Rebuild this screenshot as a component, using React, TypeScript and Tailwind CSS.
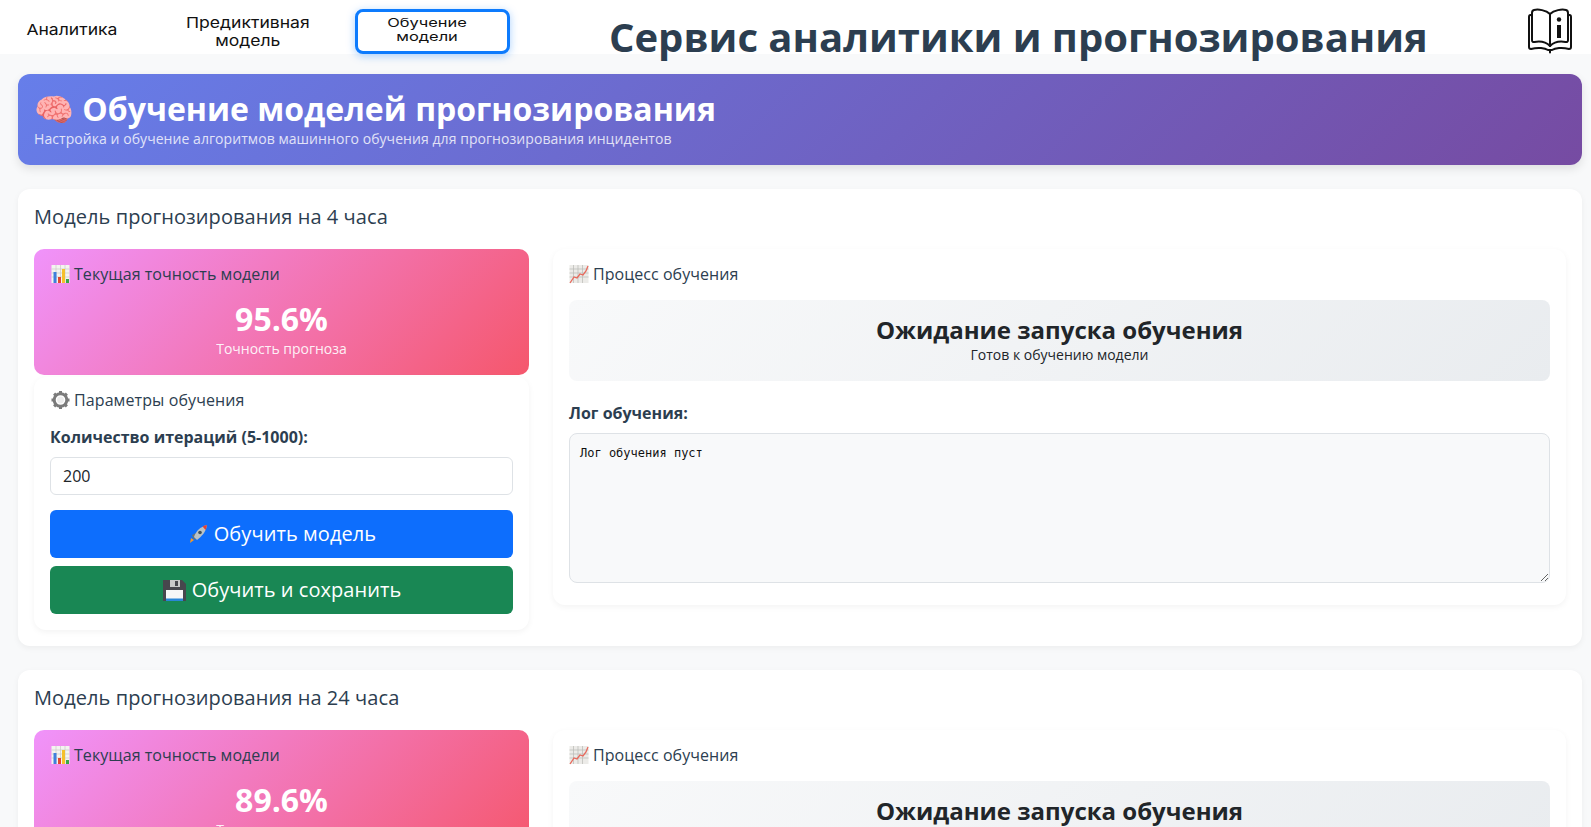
import type { ReactNode } from 'react'

function BookInfoIcon() {
  return (
    <svg width="44" height="46" viewBox="0 0 44 46" fill="none" stroke="#111" strokeWidth="2" strokeLinejoin="round" strokeLinecap="round">
      <path d="M22 6 C18 2 10 1 6 2 Q4 2.500 4 5 V32 Q4 34.500 6.500 34 C12 33 18 34 22 38 C26 34 32 33 37.500 34 Q40 34.500 40 32 V5 Q40 2.500 38 2 C34 1 26 2 22 6 Z" />
      <path d="M22 6 V38" />
      <path d="M4 7 H2.500 Q1 7 1 9 V39 Q1 41 3 41 C10 39 17 40 20 42 H24 C27 40 34 39 41 41 Q43 41 43 39 V9 Q43 7 41.500 7 H40" />
      <path d="M22 42 V44.500" />
      <circle cx="31" cy="11.500" r="2.200" fill="#111" stroke="none" />
      <path d="M31 17 V30" strokeWidth="4" strokeLinecap="butt" />
    </svg>
  )
}

// the emoji in the reference come from another set than the one installed here
function ChartBarsEmoji() {
  return (
    <svg width="20" height="20" viewBox="0 0 20 20" className="shrink-0">
      <rect x="1.500" y="1" width="18" height="18" fill="#f4f4f0" />
      <path d="M1.500 5H19.500M1.500 9H19.500M1.500 13H19.500M6 1V19M10.500 1V19M15 1V19" stroke="#c9c9c5" strokeWidth="0.7" />
      <rect x="3.500" y="8" width="3" height="11" fill="#3f7fdc" />
      <rect x="8" y="13" width="3" height="6" fill="#e2492f" />
      <rect x="12" y="5" width="3" height="14" fill="#f5c02c" />
      <rect x="16" y="15" width="3" height="4" fill="#3aa648" />
    </svg>
  )
}

function ChartLineEmoji() {
  return (
    <svg width="20" height="20" viewBox="0 0 20 20" className="shrink-0">
      <rect x="0.500" y="1" width="19" height="18" fill="#ecebe8" />
      <path d="M0.500 5H19.500M0.500 9H19.500M0.500 13H19.500M4.500 1V19M9 1V19M13.500 1V19" stroke="#b9b9b5" strokeWidth="0.7" />
      <path d="M1 19 L5 13 L8 14 L11 10 L14 11 L17 7 L19 2" fill="none" stroke="#e8695c" strokeWidth="1.300" />
    </svg>
  )
}

function GearEmoji() {
  return (
    <svg width="20" height="20" viewBox="0 0 20 20" className="shrink-0">
      <circle cx="10.500" cy="10" r="6.300" fill="none" stroke="#7b7b7b" strokeWidth="3" />
      <path
        d="M10.500 1V4M10.500 16V19M1.500 10H4.500M16.500 10H19.500M4.100 3.600L6.300 5.800M14.700 14.200L16.900 16.400M4.100 16.400L6.300 14.200M14.700 5.800L16.900 3.600"
        stroke="#7b7b7b"
        strokeWidth="3"
      />
      <circle cx="10.500" cy="10" r="3.400" fill="#ededed" />
    </svg>
  )
}

function RocketEmoji() {
  return (
    <svg width="22" height="20" viewBox="0 0 22 20" className="shrink-0">
      <path d="M3 19 L4 14 L7 16 Z" fill="#f59a23" />
      <path d="M5 11 L9 9 L10 14 L7 16 Z" fill="#66737a" />
      <path d="M7 13 C9 7 13 3 20 1 C19 8 15 12 10 16 Z" fill="#b9c2c6" />
      <path d="M15.500 2.400 C17 1.800 18.500 1.400 20 1 C19.700 3 19.200 4.500 18.600 6 Z" fill="#e0413a" />
      <circle cx="13" cy="8.500" r="1.800" fill="#40525a" />
    </svg>
  )
}

function FloppyEmoji() {
  return (
    <svg width="25" height="23" viewBox="0 0 25 23" className="shrink-0">
      <path d="M1 1 H20 L24 5 V22 H1 Z" fill="#47474d" />
      <rect x="8" y="1" width="10" height="7" fill="#c9c9c9" />
      <rect x="13" y="2" width="3" height="5" fill="#47474d" />
      <rect x="4" y="11" width="17" height="11" fill="#f7f7f7" />
      <rect x="4" y="19.500" width="17" height="2.500" fill="#2a86d6" />
    </svg>
  )
}

function NavButton({ children, active }: { children: ReactNode; active?: boolean }) {
  if (active) {
    return (
      <button className="flex h-[45px] w-[155px] items-center justify-center rounded-lg border-[3px] border-[#0d7bfd] bg-white pr-[10px] pb-[3px] text-center text-[12px] leading-[14px] text-[#111] shadow-[0_2px_8px_rgba(13,123,253,0.35)]">
        <span className="inline-block scale-x-[1.37]">{children}</span>
      </button>
    )
  }
  return (
    <button className="flex h-[54px] w-[167px] items-center justify-center pt-[6px] text-center text-[15px] leading-[18px] text-[#111]">
      <span className="inline-block scale-x-[1.17]">{children}</span>
    </button>
  )
}

function ModelCard({ hours, accuracy }: { hours: number; accuracy: string }) {
  return (
    <section className="rounded-xl bg-white p-4 shadow-[0_2px_6px_rgba(0,0,0,0.05)]">
      <h2 className="mb-5 h-[24px] text-[20px] leading-[24px] tracking-[0.07px] text-[#2c3e50]">
        Модель прогнозирования на {hours} часа
      </h2>
      <div className="grid grid-cols-[495px_1fr] gap-6">
        <div className="flex flex-col gap-[2px]">
          <div className="h-[126px] rounded-[10px] bg-[linear-gradient(135deg,#f093fb_0%,#f5576c_100%)] px-4 pt-[14px] text-center text-white">
            <h3 className="flex items-center gap-1 text-left text-[16px] leading-[22px] tracking-[0.05px] text-[#2c3e50]">
              <ChartBarsEmoji /> Текущая точность модели
            </h3>
            <div className="mt-[13px] text-[32px] leading-[41px] font-bold">{accuracy}</div>
            <div className="text-[14px] leading-[19px] opacity-90">Точность прогноза</div>
          </div>
          <div className="rounded-xl bg-white px-4 pt-[11px] pb-4 shadow-[0_2px_6px_rgba(0,0,0,0.05)]">
            <h3 className="flex items-center gap-1 text-[16px] leading-[24px] tracking-[0.1px] text-[#2c3e50]">
              <GearEmoji /> Параметры обучения
            </h3>
            <label className="mt-[14px] block text-[16px] leading-[22px] font-bold text-[#2c3e50]">
              Количество итераций (5-1000):
            </label>
            <input
              readOnly
              value="200"
              className="mt-[9px] block h-[38px] w-full rounded-md border border-[#dee2e6] bg-white px-3 text-[16px] text-[#212529]"
            />
            <button className="mt-[15px] flex h-[48px] w-full items-center justify-center gap-[5px] rounded-md bg-[#0d6efd] text-[20px] tracking-[0.08px] text-white">
              <RocketEmoji /> Обучить модель
            </button>
            <button className="mt-2 flex h-[48px] w-full items-center justify-center gap-[5px] rounded-md bg-[#198754] text-[20px] tracking-[0.05px] text-white">
              <FloppyEmoji /> Обучить и сохранить
            </button>
          </div>
        </div>
        <div className="self-start rounded-xl bg-white px-4 pt-[14px] pb-[22px] shadow-[0_2px_6px_rgba(0,0,0,0.05)]">
          <h3 className="flex items-center gap-1 text-[16px] leading-[22px] tracking-[0.05px] text-[#2c3e50]">
            <ChartLineEmoji /> Процесс обучения
          </h3>
          <div className="mt-[15px] h-[81px] rounded-lg bg-[linear-gradient(135deg,#f8f9fa_0%,#e9ecef_100%)] pt-[14px] text-center text-[#212529]">
            <div className="text-[24px] leading-[31px] font-bold">Ожидание запуска обучения</div>
            <div className="text-[14px] leading-[19px]">Готов к обучению модели</div>
          </div>
          <label className="mt-[21px] block text-[16px] leading-[22px] font-bold text-[#2c3e50]">Лог обучения:</label>
          <textarea
            readOnly
            value="Лог обучения пуст"
            className="mt-[9px] block h-[150px] w-full rounded-lg border border-[#dee2e6] bg-[#f8f9fa] p-[10px] font-['DejaVu_Sans_Mono','Liberation_Mono',monospace] text-[12px] text-[#111]"
          />
        </div>
      </div>
    </section>
  )
}

export default function App() {
  return (
    <div className="h-[827px] overflow-hidden bg-[#f8f9fa] font-['Open_Sans','Noto_Sans',sans-serif]">
      <header className="flex h-[54px] items-center bg-white">
        <div className="flex h-full items-center font-['Inter','Liberation_Sans',sans-serif]">
          <div className="ml-[-12px]">
            <NavButton>Аналитика</NavButton>
          </div>
          <div className="mt-1 ml-[9px]">
            <NavButton>
              Предиктивная
              <br />
              модель
            </NavButton>
          </div>
          <div className="ml-[24px] self-end">
            <NavButton active>
              Обучение
              <br />
              модели
            </NavButton>
          </div>
        </div>
        <h1 className="mt-5 ml-[99px] w-[818px] text-center text-[40px] leading-[54px] font-bold whitespace-nowrap text-[#2c3e50]">
          Сервис аналитики и прогнозирования
        </h1>
        <div className="mr-[19px] ml-auto self-end">
          <BookInfoIcon />
        </div>
      </header>
      <main className="flex flex-col gap-6 pt-5 pr-[9px] pl-[18px]">
        <div className="h-[91px] rounded-xl bg-[linear-gradient(135deg,#667eea_0%,#764ba2_100%)] px-4 pt-[14px] text-white shadow-[0_4px_10px_rgba(0,0,0,0.1)]">
          <h1 className="text-[32px] leading-[41px] font-bold">🧠 Обучение моделей прогнозирования</h1>
          <p className="text-[14px] leading-[19px] tracking-[0.06px] opacity-80">
            Настройка и обучение алгоритмов машинного обучения для прогнозирования инцидентов
          </p>
        </div>
        <ModelCard hours={4} accuracy="95.6%" />
        <ModelCard hours={24} accuracy="89.6%" />
      </main>
    </div>
  )
}
